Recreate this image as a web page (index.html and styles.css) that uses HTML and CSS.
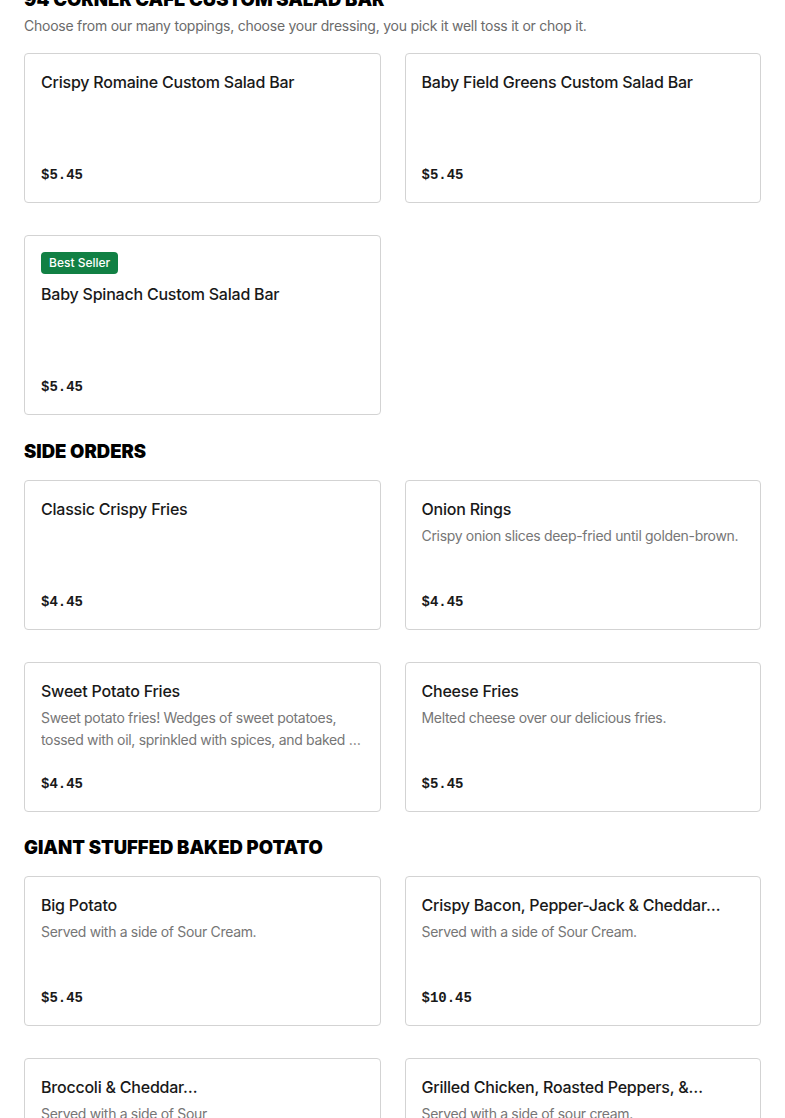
FILE: index.html
```html
<!DOCTYPE html>
<html lang="en">
<head>
<meta charset="utf-8">
<title>Menu</title>
<link rel="stylesheet" href="styles.css">
</head>
<body>
<main class="menu">
  <section class="section section-first">
    <h2 class="section-title">94 Corner Cafe Custom Salad Bar</h2>
    <p class="section-desc">Choose from our many toppings, choose your dressing, you pick it well toss it or chop it.</p>
    <div class="grid">
      <article class="card">
        <h3 class="card-title">Crispy Romaine Custom Salad Bar</h3>
        <div class="card-price">$5.45</div>
      </article>
      <article class="card">
        <h3 class="card-title">Baby Field Greens Custom Salad Bar</h3>
        <div class="card-price">$5.45</div>
      </article>
      <article class="card card-tall">
        <span class="badge">Best Seller</span>
        <h3 class="card-title">Baby Spinach Custom Salad Bar</h3>
        <div class="card-price">$5.45</div>
      </article>
    </div>
  </section>

  <section class="section">
    <h2 class="section-title">Side Orders</h2>
    <div class="grid">
      <article class="card">
        <h3 class="card-title">Classic Crispy Fries</h3>
        <div class="card-price">$4.45</div>
      </article>
      <article class="card">
        <h3 class="card-title">Onion Rings</h3>
        <p class="card-desc">Crispy onion slices deep-fried until golden-brown.</p>
        <div class="card-price">$4.45</div>
      </article>
      <article class="card">
        <h3 class="card-title">Sweet Potato Fries</h3>
        <p class="card-desc">Sweet potato fries! Wedges of sweet potatoes, tossed with oil, sprinkled with spices, and baked to perfection.</p>
        <div class="card-price">$4.45</div>
      </article>
      <article class="card">
        <h3 class="card-title">Cheese Fries</h3>
        <p class="card-desc">Melted cheese over our delicious fries.</p>
        <div class="card-price">$5.45</div>
      </article>
    </div>
  </section>

  <section class="section section-last">
    <h2 class="section-title">Giant Stuffed Baked Potato</h2>
    <div class="grid">
      <article class="card">
        <h3 class="card-title">Big Potato</h3>
        <p class="card-desc">Served with a side of Sour Cream.</p>
        <div class="card-price">$5.45</div>
      </article>
      <article class="card">
        <h3 class="card-title">Crispy Bacon, Pepper-Jack &amp; Cheddar…</h3>
        <p class="card-desc">Served with a side of Sour Cream.</p>
        <div class="card-price">$10.45</div>
      </article>
      <article class="card">
        <div class="card-narrow">
          <h3 class="card-title">Broccoli &amp; Cheddar…</h3>
          <p class="card-desc">Served with a side of Sour Cream.</p>
        </div>
        <div class="card-price">$5.45</div>
      </article>
      <article class="card">
        <h3 class="card-title">Grilled Chicken, Roasted Peppers, &amp;…</h3>
        <p class="card-desc">Served with a side of sour cream.</p>
        <div class="card-price">$10.45</div>
      </article>
    </div>
  </section>
</main>
</body>
</html>
```

FILE: styles.css
```css
* {
  box-sizing: border-box;
}

html, body {
  margin: 0;
  padding: 0;
  background: #ffffff;
}

body {
  font-family: Inter, "Liberation Sans", Arial, sans-serif;
  color: #191919;
  overflow: hidden;
}

.menu {
  padding: 0 24px;
  margin-top: -13px;
}

.section {
  margin-top: 24px;
}

.section-first {
  margin-top: 0;
}

.section-last {
  margin-top: 23px;
}

.section-title {
  margin: 0 0 17px;
  font-size: 18.5px;
  line-height: 24px;
  font-weight: 900;
  text-transform: uppercase;
  color: #000000;
}

.section-first .section-title {
  margin-bottom: 4px;
}

.section-desc {
  margin: 0 0 16px;
  font-size: 14px;
  line-height: 22px;
  letter-spacing: -0.24px;
  color: #6b6b6b;
}

.grid {
  display: grid;
  grid-template-columns: 1fr 1fr;
  column-gap: 24px;
  row-gap: 32px;
}

.card {
  display: flex;
  flex-direction: column;
  align-items: flex-start;
  height: 150px;
  padding: 16px 16px 17px;
  border: 1px solid #d3d3d3;
  border-radius: 4px;
  background: #ffffff;
  overflow: hidden;
}

.card-tall {
  height: 180px;
}

.badge {
  display: inline-block;
  height: 22px;
  padding: 0 8px;
  margin-bottom: 8px;
  border-radius: 4px;
  background: #118044;
  color: #ffffff;
  font-size: 12px;
  line-height: 22px;
  font-weight: 500;
}

.card-title {
  margin: 0;
  font-size: 16px;
  line-height: 24px;
  font-weight: 500;
  letter-spacing: -0.22px;
  color: #191919;
  white-space: nowrap;
}

.card-desc {
  margin: 4px 0 0;
  font-size: 14px;
  line-height: 22px;
  letter-spacing: -0.32px;
  color: #767676;
  display: -webkit-box;
  -webkit-line-clamp: 2;
  -webkit-box-orient: vertical;
  overflow: hidden;
}

.card-narrow {
  width: 190px;
}

.card-price {
  margin-top: auto;
  font-family: "Liberation Mono", "DejaVu Sans Mono", monospace;
  font-size: 14px;
  line-height: 20px;
  font-weight: 700;
  color: #191919;
}
```
